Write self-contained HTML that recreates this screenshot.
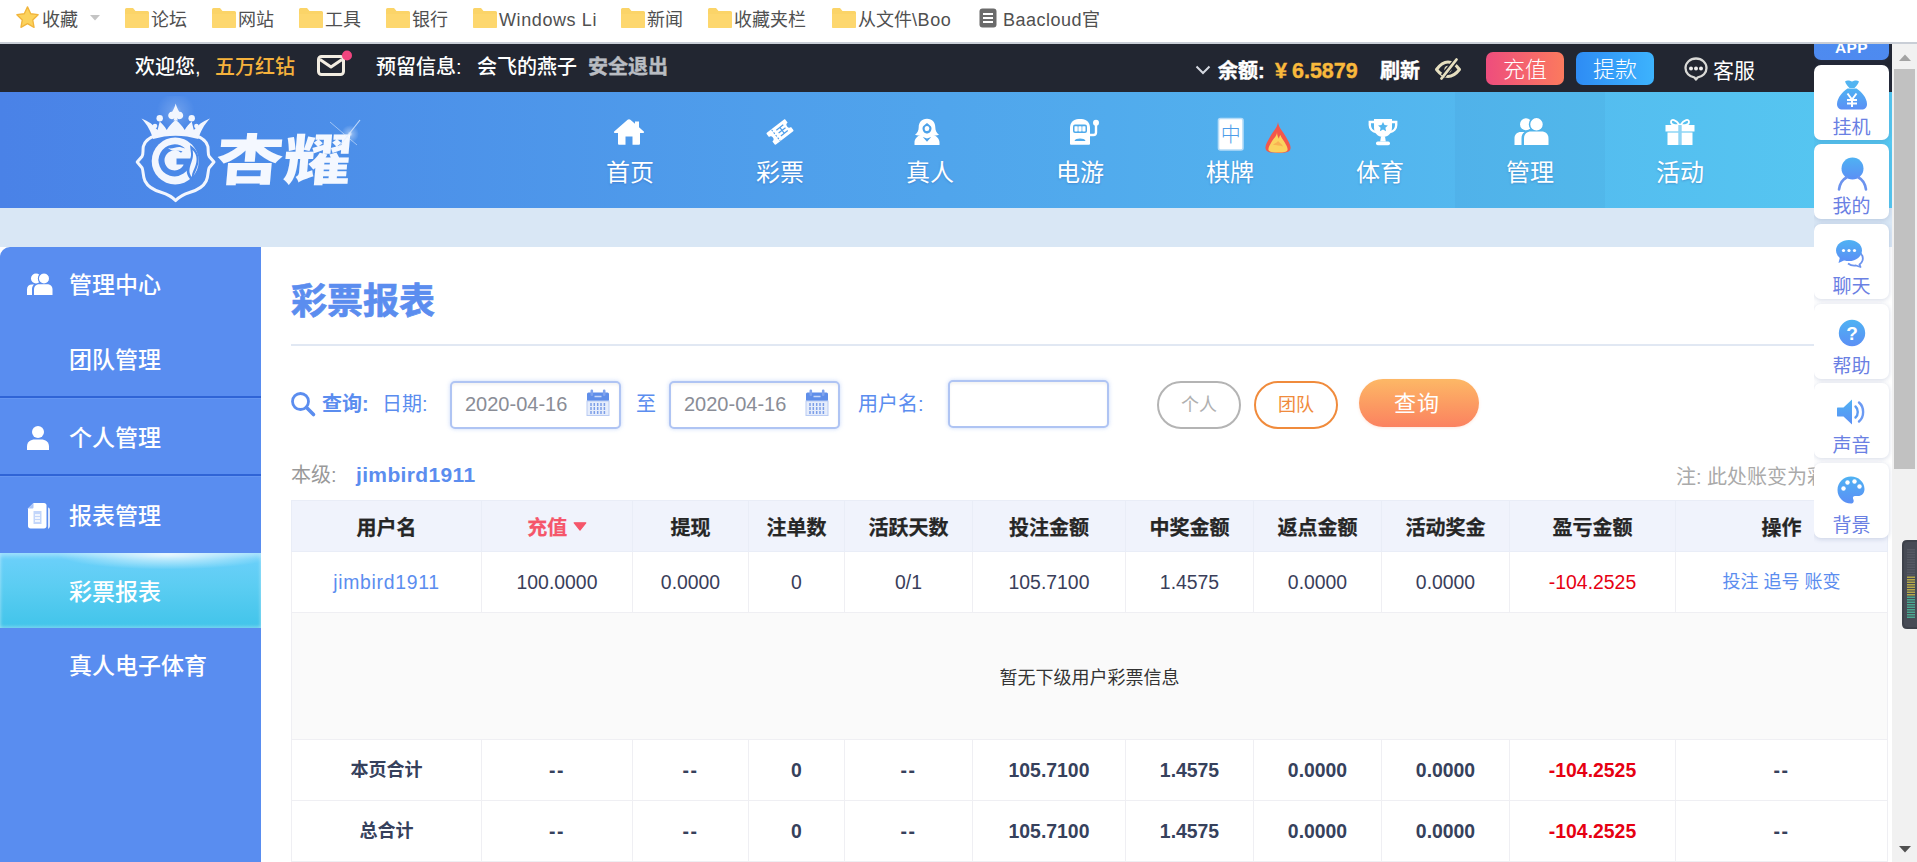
<!DOCTYPE html>
<html lang="zh-CN">
<head>
<meta charset="utf-8">
<title>彩票报表</title>
<style>
*{box-sizing:border-box;margin:0;padding:0}
html,body{width:1917px;height:862px;overflow:hidden;background:#fff}
body{font-family:"Liberation Sans","Noto Sans CJK SC",sans-serif;position:relative;color:#333}
.abs{position:absolute}
/* bookmark bar */
#bm{position:absolute;left:0;top:0;width:1917px;height:44px;background:#fff;border-bottom:2px solid #c9ced6;font-size:18px;color:#505050}
#bm .it{position:absolute;top:0;height:43px;line-height:40px;white-space:nowrap}
#bm svg{position:absolute}
/* dark bar */
#top{position:absolute;left:0;top:44px;width:1892px;height:48px;background:#222631;color:#fff;font-size:20px}
#top .t{position:absolute;top:0;height:48px;line-height:46px;white-space:nowrap;font-weight:500}
#top .b{font-weight:bold;-webkit-text-stroke:.4px currentColor}
/* header */
#hd{position:absolute;left:0;top:92px;width:1892px;height:116px;background:linear-gradient(90deg,#4a82e7 0%,#56c8f1 100%)}
#hd .nav{position:absolute;top:0;width:150px;height:116px;text-align:center;color:#fff;font-size:24px}
#hd .nav span{position:absolute;left:0;width:150px;top:63.500px;line-height:34px;text-shadow:0 1px 2px rgba(40,80,160,.35)}
#hd .nav svg{position:absolute;left:59px;top:24px}
#band{position:absolute;left:0;top:208px;width:1892px;height:39px;background:#d9e7f5}
/* sidebar */
#side{position:absolute;left:0;top:247px;width:261px;height:615px;background:#598df0;border-top-left-radius:10px;color:#fff;font-size:23px;overflow:hidden}
#side .m{position:absolute;left:69px;line-height:34px;white-space:nowrap;font-weight:500}
#side .sep{position:absolute;left:0;width:261px;height:3px;background:#2f64d6;border-bottom:1px solid #6596f2;margin-top:1px}
#side .act{position:absolute;left:0;top:306px;width:261px;height:75px;background:radial-gradient(ellipse 42% 20% at 64% 2%,rgba(255,255,255,.8),rgba(255,255,255,0)),linear-gradient(180deg,#6dd0fb 0%,#5bcdf2 45%,#41c4ea 100%);box-shadow:inset 0 3px 4px rgba(255,255,255,.35),inset 0 -2px 3px rgba(255,255,255,.25)}
/* main */
#main{position:absolute;left:261px;top:247px;width:1631px;height:615px;background:#fff;overflow:hidden}

#main .title{position:absolute;left:30px;top:27px;font-size:36px;font-weight:bold;color:#5b8def;line-height:56px;white-space:nowrap;-webkit-text-stroke:.7px #5b8def}
#main .hr{position:absolute;left:30px;top:97px;width:1596px;height:2px;background:#e1e8f3}
#main .lb{position:absolute;top:133px;height:48px;line-height:49px;font-size:20px;color:#5b8def;white-space:nowrap}
#main .inp{position:absolute;top:134px;height:48px;border:2px solid #afc4f3;border-radius:5px;background:#fff;box-shadow:0 0 4px rgba(120,160,240,.4),inset 0 2px 3px rgba(0,0,0,.05);font-size:20px;color:#8a8d96;line-height:42px;padding-left:13px}
#main .pill{position:absolute;top:134px;width:84px;height:48px;border-radius:24px;border:2px solid #b4b4b4;color:#b0b0b0;font-size:18px;text-align:center;line-height:45px;background:#fff}
#main .qbtn{position:absolute;left:1098px;top:132px;width:120px;height:48px;border-radius:24px;background:linear-gradient(180deg,#fdb866 0%,#fc9a62 55%,#fb8260 100%);color:#fff;font-size:22px;text-align:center;line-height:49px;letter-spacing:1px;padding-right:4px;box-shadow:0 1px 3px rgba(250,140,90,.2)}
#tb{position:absolute;left:30px;top:253px;border-collapse:collapse;table-layout:fixed;width:1597px;font-size:19.400px;color:#3a3e5a}
#tb td,#tb th{border:1px solid #efeff3;text-align:center;padding:0;white-space:nowrap;overflow:hidden}
#tb th{height:51px;background:#f0f3fc;font-size:20px;font-weight:bold;color:#262626;border-color:#e9edf7;padding-top:1px;-webkit-text-stroke:.25px currentColor}
#tb tr.r td{height:61px}
#tb tr.e td{height:127px;background:#fafafa;font-size:18px;color:#333}
#tb tr.s td{height:61px;font-weight:bold;color:#36415c}
#tb tr.s td.red,#tb td.red{color:#e60012}
#tb .red{color:#e60012}
#tb a{color:#5b8def;text-decoration:none}

#float{position:absolute;left:1814px;top:44px;width:78px;height:520px;overflow:hidden}
#float .c{position:absolute;left:0;width:75px;height:75px;background:#fff;border-radius:7px;box-shadow:0 1px 5px rgba(60,80,140,.22)}
#float .c span{position:absolute;left:0;width:75px;top:50px;text-align:center;font-size:19px;line-height:26px;color:#6a80e3;font-weight:400}
#float .c svg{position:absolute}
#sb{position:absolute;left:1892px;top:44px;width:25px;height:818px;background:#f1f1f1}
#sb .th{position:absolute;left:2px;top:25px;width:21px;height:400px;background:#c1c1c1}
</style>
</head>
<body>
<div id="bm">
<svg style="left:15px;top:5px" width="25" height="25" viewBox="0 0 24 24"><path d="M12 1.8l3.1 6.6 7.1.9-5.2 5 1.3 7.1L12 17.9 5.7 21.4 7 14.3 1.8 9.3l7.1-.9z" fill="#fcd25c" stroke="#f1b53c" stroke-width="1.3" stroke-linejoin="round"/></svg>
<div class="it" style="left:42px">收藏</div>
<svg style="left:89px;top:14px" width="12" height="8" viewBox="0 0 12 8"><path d="M1 1h10L6 6.5z" fill="#c4c4c4"/></svg>
<svg style="left:124px;top:7px" width="26" height="22" viewBox="0 0 26 22"><path d="M1 2.5Q1 1 2.5 1H9l2.5 3H23.5Q25 4 25 5.5V19.5Q25 21 23.5 21H2.5Q1 21 1 19.5Z" fill="#fbd468"/><path d="M1 7H25V19.5Q25 21 23.5 21H2.5Q1 21 1 19.5Z" fill="#fdd76e"/></svg>
<div class="it" style="left:151px">论坛</div>
<svg style="left:211px;top:7px" width="26" height="22" viewBox="0 0 26 22"><path d="M1 2.5Q1 1 2.5 1H9l2.5 3H23.5Q25 4 25 5.5V19.5Q25 21 23.5 21H2.5Q1 21 1 19.5Z" fill="#fbd468"/><path d="M1 7H25V19.5Q25 21 23.5 21H2.5Q1 21 1 19.5Z" fill="#fdd76e"/></svg>
<div class="it" style="left:238px">网站</div>
<svg style="left:298px;top:7px" width="26" height="22" viewBox="0 0 26 22"><path d="M1 2.5Q1 1 2.5 1H9l2.5 3H23.5Q25 4 25 5.5V19.5Q25 21 23.5 21H2.5Q1 21 1 19.5Z" fill="#fbd468"/><path d="M1 7H25V19.5Q25 21 23.5 21H2.5Q1 21 1 19.5Z" fill="#fdd76e"/></svg>
<div class="it" style="left:325px">工具</div>
<svg style="left:385px;top:7px" width="26" height="22" viewBox="0 0 26 22"><path d="M1 2.5Q1 1 2.5 1H9l2.5 3H23.5Q25 4 25 5.5V19.5Q25 21 23.5 21H2.5Q1 21 1 19.5Z" fill="#fbd468"/><path d="M1 7H25V19.5Q25 21 23.5 21H2.5Q1 21 1 19.5Z" fill="#fdd76e"/></svg>
<div class="it" style="left:412px">银行</div>
<svg style="left:472px;top:7px" width="26" height="22" viewBox="0 0 26 22"><path d="M1 2.5Q1 1 2.5 1H9l2.5 3H23.5Q25 4 25 5.5V19.5Q25 21 23.5 21H2.5Q1 21 1 19.5Z" fill="#fbd468"/><path d="M1 7H25V19.5Q25 21 23.5 21H2.5Q1 21 1 19.5Z" fill="#fdd76e"/></svg>
<div class="it" style="left:499px;letter-spacing:.6px">Windows Li</div>
<svg style="left:620px;top:7px" width="26" height="22" viewBox="0 0 26 22"><path d="M1 2.5Q1 1 2.5 1H9l2.5 3H23.5Q25 4 25 5.5V19.5Q25 21 23.5 21H2.5Q1 21 1 19.5Z" fill="#fbd468"/><path d="M1 7H25V19.5Q25 21 23.5 21H2.5Q1 21 1 19.5Z" fill="#fdd76e"/></svg>
<div class="it" style="left:647px">新闻</div>
<svg style="left:707px;top:7px" width="26" height="22" viewBox="0 0 26 22"><path d="M1 2.5Q1 1 2.5 1H9l2.5 3H23.5Q25 4 25 5.5V19.5Q25 21 23.5 21H2.5Q1 21 1 19.5Z" fill="#fbd468"/><path d="M1 7H25V19.5Q25 21 23.5 21H2.5Q1 21 1 19.5Z" fill="#fdd76e"/></svg>
<div class="it" style="left:734px">收藏夹栏</div>
<svg style="left:831px;top:7px" width="26" height="22" viewBox="0 0 26 22"><path d="M1 2.5Q1 1 2.5 1H9l2.5 3H23.5Q25 4 25 5.5V19.5Q25 21 23.5 21H2.5Q1 21 1 19.5Z" fill="#fbd468"/><path d="M1 7H25V19.5Q25 21 23.5 21H2.5Q1 21 1 19.5Z" fill="#fdd76e"/></svg>
<div class="it" style="left:858px">从文件<span style="letter-spacing:.6px">\Boo</span></div>
<svg style="left:979px;top:8px" width="18" height="20" viewBox="0 0 18 20"><rect x="0.5" y="0.5" width="17" height="19" rx="3" fill="#6b6b6b"/><rect x="4" y="5" width="10" height="2" fill="#fff"/><rect x="4" y="9" width="10" height="2" fill="#fff"/><rect x="4" y="13" width="10" height="2" fill="#fff"/></svg>
<div class="it" style="left:1003px"><span style="letter-spacing:.5px">Baacloud</span>官</div>
</div>
<div id="top">
<div class="t" style="left:135px">欢迎您,</div>
<div class="t" style="left:215px;color:#f6b23c">五万红钻</div>
<svg class="abs" style="left:316px;top:6px" width="42" height="30" viewBox="0 0 42 30"><rect x="2.5" y="6.5" width="25" height="18" rx="3" fill="none" stroke="#f3ede2" stroke-width="3"/><path d="M4 9.5l11 7.5 11-7.5" fill="none" stroke="#f3ede2" stroke-width="3" stroke-linejoin="round"/><circle cx="31" cy="5.5" r="5" fill="#f2457f"/></svg>
<div class="t" style="left:376px">预留信息:</div>
<div class="t" style="left:477px">会飞的燕子</div>
<div class="t b" style="left:588px;color:#b9bcc2">安全退出</div>
<svg class="abs" style="left:1195px;top:21px" width="16" height="10" viewBox="0 0 16 10"><path d="M1.500 1.500l6.500 6.500 6.500-6.500" fill="none" stroke="#d5d8e0" stroke-width="2"/></svg>
<div class="t b" style="left:1218px;top:4px">余额:</div>
<div class="t b" style="left:1275px;top:4px;color:#f9b93c;font-size:21.5px">¥<span style="margin-left:5px">6.5879</span></div>
<div class="t b" style="left:1380px;top:4px">刷新</div>
<svg class="abs" style="left:1434px;top:13px" width="28" height="24" viewBox="0 0 28 24"><path d="M2.500 12.500Q8 5 14 5T25.500 12.500Q20 19.500 14 19.500T2.500 12.500Z" fill="none" stroke="#e6dfc0" stroke-width="3" stroke-linejoin="round"/><circle cx="14" cy="12.300" r="3.600" fill="#e6dfc0"/><path d="M22.500 3L9 19" stroke="#222631" stroke-width="5.500"/><path d="M22.500 2.500L7.500 21.500" stroke="#e6dfc0" stroke-width="2.800" stroke-linecap="round"/></svg>
<div class="abs" style="left:1486px;top:8px;width:78px;height:33px;border-radius:7px;background:linear-gradient(90deg,#ee4d7d,#fb7a5e);text-align:center;line-height:36px;font-size:22px;font-weight:300">充值</div>
<div class="abs" style="left:1576px;top:8px;width:78px;height:33px;border-radius:7px;background:linear-gradient(90deg,#2e8cf4,#3db3fd);text-align:center;line-height:36px;font-size:22px;font-weight:300">提款</div>
<svg class="abs" style="left:1683px;top:12px" width="26" height="26" viewBox="0 0 26 26"><path d="M13 2.500c5.800 0 10.500 4.200 10.500 9.500 0 4.800-3.800 8.600-8.700 9.300L13 23.500l-1.800-2.200C6.300 20.600 2.500 16.800 2.500 12c0-5.300 4.700-9.500 10.500-9.500z" fill="none" stroke="#d9d9d6" stroke-width="2.300" stroke-linejoin="round"/><circle cx="8" cy="12.500" r="2" fill="#eee"/><circle cx="13" cy="12.500" r="2" fill="#eee"/><circle cx="18" cy="12.500" r="2" fill="#eee"/></svg>
<div class="t" style="left:1713px;top:4px;font-size:21px;font-weight:400">客服</div>
</div>
<div id="hd">
<svg class="abs" style="left:128px;top:4px" width="240" height="112" viewBox="0 0 240 112">
<defs><radialGradient id="gl"><stop offset="0" stop-color="#fff" stop-opacity=".95"/><stop offset=".3" stop-color="#fff" stop-opacity=".35"/><stop offset="1" stop-color="#fff" stop-opacity="0"/></radialGradient></defs>
<circle cx="47.7" cy="15" r="19" fill="url(#gl)" opacity=".4"/>
<g fill="#f2f6fe">
<path d="M47.7 7.500c1 3.500 2 6 3.600 8.300a3.700 3.700 0 1 1-2.200 6.500l.8 2.300h-4.400l.8-2.300a3.700 3.700 0 1 1-2.200-6.500c1.600-2.300 2.600-4.800 3.600-8.300z"/>
<circle cx="31.700" cy="22.300" r="3.200"/><circle cx="63.700" cy="22.300" r="3.200"/>
<circle cx="27" cy="30" r="2.300"/><circle cx="68.400" cy="30" r="2.300"/>
<path d="M13.500 22.500c7 2.500 12 6.500 16 11.500 1-3 1.500-6 2.200-8.500 3 2.500 5 5 7 8.500 2.500-4 5.500-7.500 9-10 3.500 2.500 6.500 6 9 10 2-3.500 4-6 7-8.500.700 2.500 1.200 5.500 2.200 8.500 4-5 9-9 16-11.500-6 6.500-9.500 13-11.500 20.500-15-4.500-30.500-4.500-45.400 0C23 35.500 19.500 29 13.500 22.500z"/>
</g>
<path d="M47.6 36.3C40.0 36.3 34.0 37.0 30.4 38.6C22.0 41.0 16.5 44.5 15.3 50.5C14.6 55.0 15.6 58.0 14.0 60.5L9.2 66.1L14.0 71.7C15.6 75.0 14.6 80.0 17.0 85.0C20.0 91.0 27.0 94.5 33.0 96.2C39.0 98.0 44.0 100.5 47.6 104.6C51.2 100.5 56.2 98.0 62.2 96.2C68.2 94.5 75.2 91.0 78.2 85.0C80.6 80.0 79.6 75.0 81.2 71.7L86.0 66.1L81.2 60.5C79.6 58.0 80.6 55.0 79.9 50.5C78.7 44.5 73.2 41.0 64.8 38.6C61.2 37.0 55.2 36.3 47.6 36.3Z" fill="none" stroke="#f2f6fe" stroke-width="3" stroke-linejoin="round"/>
<circle cx="47.200" cy="65" r="23.500" fill="#f2f6fe"/>
<path d="M55 54.500A13 13 0 1 0 59.500 65.500H48.500" fill="none" stroke="#4a88e8" stroke-width="6"/>
<path d="M62 49c7 4 10 11 8 19.500-1.500 6.500-5.500 11-5 17-5.500-3.500-7-9-6-14 1-5 4.500-9 4-14-.3-3-.7-5.500-1-8.500z" fill="#4a88e8"/>
<path d="M64.500 54c4 3.500 5 9 3.300 14.500-1.200 4.500-4 8-4 12.500-2.800-3.500-2.800-7-1.600-11 1.400-4.800 4-9.500 2.300-16z" fill="#f2f6fe"/>
<path d="M40 52c4 1.500 8-1.500 12-1 3 .4 5 2 8 1.500-1 2.500-4 3-7 2.500-4-.7-8 1.500-13-3z" fill="#f2f6fe"/>
<text transform="translate(86.500 83.800) skewX(-5) scale(1 .81)" x="0" y="0" font-size="68" font-weight="900" fill="#f4f8ff" textLength="135" lengthAdjust="spacingAndGlyphs" font-family="'Liberation Sans','Noto Sans CJK SC',sans-serif">杏耀</text>
<g><circle cx="222" cy="38" r="9" fill="url(#gl)" opacity=".9"/><path d="M232 24L210 52" stroke="#e4f0ff" stroke-width="1.200" opacity=".75"/><path d="M202 26L229 49" stroke="#e4f0ff" stroke-width="1" opacity=".55"/></g>
</svg>
<div class="nav" style="left:555px"><svg style="left:58px;top:26px" width="32" height="28" viewBox="0 0 32 28"><path d="M16 1.200c.5 0 1 .2 1.400.6L22 5.800V3.500h4v5.800l4.800 4.200c.6.600.2 1.500-.6 1.500H27v10.500c0 .8-.5 1.300-1.300 1.300H19.500v-8.300h-7v8.300H6.300c-.8 0-1.300-.5-1.300-1.300V15H1.800c-.8 0-1.200-.9-.6-1.500L14.600 1.800c.4-.4.900-.6 1.400-.6z" fill="#fff"/></svg><span>首页</span></div>
<div class="nav" style="left:705px"><svg style="left:61px;top:26px" width="28" height="28" viewBox="0 0 32 32"><g transform="rotate(-38 16 16)"><path d="M3.500 7.500h25c.5 0 1 .5 1 1v4.300a3.200 3.200 0 0 0 0 6.400v4.300c0 .5-.5 1-1 1h-25c-.5 0-1-.5-1-1v-4.300a3.200 3.200 0 0 0 0-6.400V8.500c0-.5.500-1 1-1z" fill="#fff"/><path d="M10 8v16" stroke="#4f9fea" stroke-width="1.200" stroke-dasharray="2.200 1.600"/><path d="M14 11.800h10M14 16h10M14 20.200h10M19 11.800v8.400" stroke="#4f9fea" stroke-width="1.400" fill="none"/></g></svg><span>彩票</span></div>
<div class="nav" style="left:855px"><svg style="left:58px;top:26px" width="28" height="28" viewBox="0 0 28 28"><path d="M14 .8c-5.500 0-8.300 3.700-8.300 8.500 0 3.200-1.200 5.500-3.700 7.500 2.200 1 4.500 1 6.200 0C5 18 1.500 20.300 1.500 24.500V27h25v-2.500c0-4.200-3.500-6.500-6.700-7.700 1.700 1 4 1 6.200 0-2.500-2-3.700-4.300-3.700-7.500C22.300 4.500 19.500.8 14 .8z" fill="#fff"/><path d="M14 5c-2.200 2-4.300 2.800-4.500 5 0 3.300 2 5.500 4.500 5.500s4.500-2.200 4.500-5.500c-.2-2.200-2.300-3-4.500-5z" fill="#4da2ea"/><ellipse cx="14" cy="10.500" rx="2.300" ry="2.600" fill="#fff"/><path d="M9.800 19l4.200 4.800 4.200-4.800-4.200 1.600z" fill="#4da2ea"/></svg><span>真人</span></div>
<div class="nav" style="left:1005px"><svg style="left:63px;top:26px" width="33" height="28" viewBox="0 0 33 28"><path d="M2 10C2 4.500 5.500 1 10.500 1h3C18.500 1 22 4.500 22 10v15.500c0 .8-.5 1.300-1.300 1.300H3.300c-.8 0-1.300-.5-1.300-1.300z" fill="#fff"/><rect x="5" y="6.500" width="14" height="8.500" rx="2" fill="#4fabec"/><rect x="6.500" y="8.200" width="3.200" height="5.200" rx=".6" fill="#fff"/><rect x="10.400" y="8.200" width="3.200" height="5.200" rx=".6" fill="#fff"/><rect x="14.300" y="8.200" width="3.200" height="5.200" rx=".6" fill="#fff"/><path d="M6.500 23c.8-3.200 10.200-3.200 11 0z" fill="#4fabec"/><path d="M22 17h3.500c1.500 0 2.500-1 2.500-2.500V6" fill="none" stroke="#fff" stroke-width="2.400"/><circle cx="28" cy="4.800" r="3" fill="#fff"/></svg><span>电游</span></div>
<div class="nav" style="left:1155px"><svg style="left:62px;top:25px" width="28" height="35" viewBox="0 0 28 35"><rect x="1.500" y="1.500" width="24.500" height="31.500" rx="2" fill="#fff" stroke="#b5dcf8" stroke-width="1.600"/><text x="13.700" y="24.500" font-size="20" font-weight="300" fill="#4e9de9" text-anchor="middle" font-family="'Liberation Sans','Noto Sans CJK SC',sans-serif">中</text></svg><svg style="left:109px;top:29px" width="28" height="33" viewBox="0 0 28 33"><path d="M14 1C13.500 6.500 9 10.500 6 16 3.500 20.500 1 24 1.500 27.500 2 31 6 32 14 32s12-1 12.500-4.500c.5-3.500-2-7-4.500-11.500-3-5.500-7.500-9.500-8-15z" fill="#f4574a"/><path d="M13 11c0 4-3.500 6.500-5.500 10-2 3.500-3.500 6-3 8 .5 2 4 2.500 9.500 2.500s9-.5 9.500-2.500c.5-2-1-4.500-3-8-1.500-2.600-3.500-4.500-4-7-1 1-1.500 2.200-1.500 3.800-1.200-2-2-4-2-6.800z" fill="#fbd35e"/><path d="M9 24c1.500-2 4-2 5-4 1.500 2 4 3 5 5.500-3-1-7-1.500-10-1.500z" fill="#f9a94f" opacity=".8"/></svg><span>棋牌</span></div>
<div class="nav" style="left:1305px"><svg style="left:62px;top:26px" width="32" height="29" viewBox="0 0 32 29"><path d="M7 1h18v8.500c0 5.500-3.800 9.500-9 9.500s-9-4-9-9.500z" fill="#fff"/><path d="M7.500 4H2.800v3c0 3.800 2.700 6.500 6.200 7M24.500 4h4.700v3c0 3.800-2.700 6.500-6.200 7" fill="none" stroke="#fff" stroke-width="2.400"/><path d="M16 4l1.500 3.100 3.400.4-2.500 2.300.7 3.400L16 11.500l-3.100 1.700.7-3.400-2.500-2.300 3.400-.4z" fill="#53b6ee"/><path d="M14 18.500h4l.8 5h-5.600z" fill="#fff"/><rect x="9" y="23.500" width="14" height="3.800" rx="1.800" fill="#fff"/></svg><span>体育</span></div>
<div class="nav" style="left:1455px;background:rgba(30,90,170,.055)"><svg style="left:58px;top:25px" width="37" height="29" viewBox="0 0 37 29"><circle cx="13" cy="7.300" r="6" fill="#fff"/><circle cx="23.500" cy="7.300" r="7" fill="#fff" stroke="#4fb2ea" stroke-width="1.500"/><path d="M1.500 28v-6.500c0-4 2.500-6.500 6.500-6.500h3.500c-2.200 1.500-3 3.800-3 6.500V28z" fill="#fff"/><path d="M11 28v-6.500c0-4.700 3-7 7-7h10.500c4 0 7 2.300 7 7V28z" fill="#fff"/></svg><span>管理</span></div>
<div class="nav" style="left:1605px"><svg style="left:59px;top:25px" width="32" height="29" viewBox="0 0 32 29"><path d="M15.500 8C12 2.500 7 1.500 7 5s5 3.200 8.500 3zM16.500 8C20 2.500 25 1.500 25 5s-5 3.200-8.500 3z" fill="none" stroke="#fff" stroke-width="1.800"/><rect x="1.500" y="8" width="29" height="6.500" fill="#fff"/><rect x="3.500" y="15.500" width="25" height="12.500" fill="#fff"/><rect x="14.300" y="8" width="3.400" height="20" fill="#8fd4f5"/></svg><span>活动</span></div>
</div>
<div id="band"></div>
<div id="side">
<svg class="abs" style="left:26px;top:25px" width="28" height="24" viewBox="0 0 28 24"><circle cx="10" cy="6.500" r="5" fill="#fff"/><circle cx="18" cy="6.500" r="5.600" fill="#fff" stroke="#598df0" stroke-width="1.200"/><path d="M1 23v-5.500c0-3.200 2-5 5-5h2c-1.500 1.300-2 3-2 5V23z" fill="#fff"/><path d="M8 23v-5.500c0-3.700 2.500-5.300 5.500-5.300h7.500c3 0 5.500 1.600 5.500 5.300V23z" fill="#fff"/></svg>
<div class="m" style="top:21px">管理中心</div>
<div class="m" style="top:96px">团队管理</div>
<div class="sep" style="top:148px"></div>
<svg class="abs" style="left:26px;top:178px" width="24" height="26" viewBox="0 0 24 26"><circle cx="12" cy="7" r="6" fill="#fff"/><path d="M1 25v-3.500c0-4.500 3.500-7 8-7h6c4.500 0 8 2.500 8 7V25z" fill="#fff"/></svg>
<div class="m" style="top:174px">个人管理</div>
<div class="sep" style="top:226px"></div>
<svg class="abs" style="left:27px;top:255px" width="24" height="28" viewBox="0 0 24 28"><path d="M1 6.500L6.500 1H17c1.500 0 2.500 1 2.500 2.500V24c0 1.500-1 2.500-2.500 2.500H3.500C2 26.500 1 25.500 1 24z" fill="#fff"/><path d="M21 5.500c1.200.3 2 1.200 2 2.500v16c0 1.500-1 2.500-2 2.700z" fill="#fff" opacity=".8"/><path d="M6.500 9h8v13h-8z" fill="#c3d6fa"/><path d="M8 13h5M8 16h5M8 19h5" stroke="#fff" stroke-width="1.300"/><path d="M1 6.500h4c1 0 1.500-.5 1.500-1.500V1z" fill="#aac4f7"/></svg>
<div class="m" style="top:252px">报表管理</div>
<div class="act"></div>
<div class="m" style="top:328px">彩票报表</div>
<div class="m" style="top:402px">真人电子体育</div>
</div>
<div id="main">
<div class="title">彩票报表</div>
<div class="hr"></div>
<svg class="abs" style="left:28px;top:143px" width="28" height="28" viewBox="0 0 28 28"><circle cx="11.500" cy="11.500" r="8" fill="none" stroke="#5b8def" stroke-width="2.800"/><path d="M17.500 17.500l7 7" stroke="#5b8def" stroke-width="3.600" stroke-linecap="round"/></svg>
<div class="lb" style="left:61px;font-weight:bold">查询:</div>
<div class="lb" style="left:121px">日期:</div>
<div class="inp" style="left:189px;width:171px">2020-04-16</div>
<svg class="abs" style="left:324px;top:141px" width="26" height="30" viewBox="0 0 26 30"><rect x="2" y="4.500" width="22" height="9" rx="1.500" fill="#5f8ee9"/><rect x="2" y="13" width="22" height="14.500" fill="#e6edfb" stroke="#b9cbf3" stroke-width="1"/><path d="M6 15v11M9.300 15v11M12.700 15v11M16 15v11M19.400 15v11" stroke="#7d9fe8" stroke-width="1.500"/><path d="M3 18.500h20M3 22.500h20" stroke="#e6edfb" stroke-width="1"/><rect x="5.500" y="1.500" width="2.600" height="6.500" rx="1.200" fill="#7fa3ee"/><rect x="17.900" y="1.500" width="2.600" height="6.500" rx="1.200" fill="#7fa3ee"/><path d="M9.500 8.500h7" stroke="#c9d8f8" stroke-width="1.500"/></svg>
<div class="lb" style="left:375px">至</div>
<div class="inp" style="left:408px;width:171px">2020-04-16</div>
<svg class="abs" style="left:543px;top:141px" width="26" height="30" viewBox="0 0 26 30"><rect x="2" y="4.500" width="22" height="9" rx="1.500" fill="#5f8ee9"/><rect x="2" y="13" width="22" height="14.500" fill="#e6edfb" stroke="#b9cbf3" stroke-width="1"/><path d="M6 15v11M9.300 15v11M12.700 15v11M16 15v11M19.400 15v11" stroke="#7d9fe8" stroke-width="1.500"/><path d="M3 18.500h20M3 22.500h20" stroke="#e6edfb" stroke-width="1"/><rect x="5.500" y="1.500" width="2.600" height="6.500" rx="1.200" fill="#7fa3ee"/><rect x="17.900" y="1.500" width="2.600" height="6.500" rx="1.200" fill="#7fa3ee"/><path d="M9.500 8.500h7" stroke="#c9d8f8" stroke-width="1.500"/></svg>
<div class="lb" style="left:597px">用户名:</div>
<div class="inp" style="left:687px;top:133px;width:161px"></div>
<div class="pill" style="left:896px">个人</div>
<div class="pill" style="left:993px;border-color:#f08b3c;color:#f08b3c">团队</div>
<div class="qbtn">查询</div>
<div class="abs" style="left:30px;top:212px;font-size:20px;color:#999;line-height:32px;white-space:nowrap">本级:</div>
<div class="abs" style="left:95px;top:212px;font-size:21px;font-weight:bold;color:#5b8def;line-height:32px;white-space:nowrap;letter-spacing:.35px">jimbird1911</div>
<div class="abs" style="left:1415px;top:214px;font-size:20px;color:#aaa;line-height:32px;white-space:nowrap">注: 此处账变为彩票账变</div>
<table id="tb"><colgroup><col style="width:190px"><col style="width:151px"><col style="width:116px"><col style="width:96px"><col style="width:128px"><col style="width:153px"><col style="width:128px"><col style="width:128px"><col style="width:128px"><col style="width:166px"><col style="width:212px"></colgroup>
<tr><th>用户名</th><th style="color:#f5566a">充值 <svg width="14" height="9" viewBox="0 0 14 9" style="position:relative;top:-4px"><path d="M1.200 0.800h11.600L7 8z" fill="#f5566a" stroke="#f5566a" stroke-width="1.200" stroke-linejoin="round"/></svg></th><th>提现</th><th>注单数</th><th>活跃天数</th><th>投注金额</th><th>中奖金额</th><th>返点金额</th><th>活动奖金</th><th>盈亏金额</th><th>操作</th></tr>
<tr class="r"><td><a style="letter-spacing:.7px">jimbird1911</a></td><td>100.0000</td><td>0.0000</td><td>0</td><td>0/1</td><td>105.7100</td><td>1.4575</td><td>0.0000</td><td>0.0000</td><td class="red">-104.2525</td><td><a style="font-size:18px;position:relative;top:-2px">投注 追号 账变</a></td></tr>
<tr class="e"><td colspan="11">暂无下级用户彩票信息</td></tr>
<tr class="s"><td><span style="font-size:18px;position:relative;top:-2px">本页合计</span></td><td style="letter-spacing:1.500px">--</td><td style="letter-spacing:1.500px">--</td><td>0</td><td style="letter-spacing:1.500px">--</td><td>105.7100</td><td>1.4575</td><td>0.0000</td><td>0.0000</td><td class="red">-104.2525</td><td style="letter-spacing:1.500px">--</td></tr>
<tr class="s"><td><span style="font-size:18px;position:relative;top:-2px">总合计</span></td><td style="letter-spacing:1.500px">--</td><td style="letter-spacing:1.500px">--</td><td>0</td><td style="letter-spacing:1.500px">--</td><td>105.7100</td><td>1.4575</td><td>0.0000</td><td>0.0000</td><td class="red">-104.2525</td><td style="letter-spacing:1.500px">--</td></tr>
</table>
</div>
<div id="float">
<div class="c" style="top:-59px;background:linear-gradient(180deg,#4a90ee,#4e8af0);border-radius:7px"><span style="color:#fff;font-weight:bold;font-size:15.500px;top:50px;letter-spacing:.3px">APP</span></div>
<div class="c" style="top:21px"><svg style="left:21px;top:14px" width="34" height="32" viewBox="0 0 34 32"><defs><linearGradient id="bg1" x1="0" y1="0" x2="0" y2="1"><stop offset="0" stop-color="#4fb2f3"/><stop offset="1" stop-color="#5b8ff5"/></linearGradient></defs><path d="M10 2.500c2.500-1.800 5-.5 7 0 2-.5 4.500-1.800 7 0-1 3-3 5-4.500 6.500h-5C13 7.500 11 5.500 10 2.500z" fill="#52b4f1"/><path d="M12.500 9.500h9C26 12 32 19 32 25c0 3.500-2 5.500-5.500 5.500h-19C4 30.500 2 28.500 2 25c0-6 6-13 10.500-15.500z" fill="url(#bg1)"/><path d="M12.500 14.500l4.500 6 4.500-6M12 21h10M12 24.500h10M17 20.500v7.500" fill="none" stroke="#fff" stroke-width="2"/></svg><span>挂机</span></div>
<div class="c" style="top:100px"><svg style="left:22px;top:12px" width="34" height="36" viewBox="0 0 34 36"><defs><linearGradient id="bg2" x1="0" y1="0" x2="0" y2="1"><stop offset="0" stop-color="#4fb2f3"/><stop offset="1" stop-color="#5b8ff5"/></linearGradient></defs><circle cx="16.500" cy="12.500" r="11" fill="url(#bg2)"/><path d="M3 33.500C4 26.500 7.500 23 10.500 21.500M30 33.500C29 26.500 25.500 23 22.500 21.500" fill="none" stroke="#6c93ee" stroke-width="2.600" stroke-linecap="round"/></svg><span>我的</span></div>
<div class="c" style="top:180px"><svg style="left:19px;top:12px" width="38" height="34" viewBox="0 0 38 34"><defs><linearGradient id="bg3" x1="0" y1="0" x2="0" y2="1"><stop offset="0" stop-color="#4fb2f3"/><stop offset="1" stop-color="#5b8ff5"/></linearGradient></defs><path d="M26 16c3 2 4.500 5 3.500 8.500-.8 2.500-3 4-3 4l1 2.500-4.500-1.500c-3 .5-6-.5-8-2" fill="none" stroke="#6c93ee" stroke-width="1.800" stroke-linejoin="round"/><ellipse cx="16" cy="14.500" rx="13" ry="10.500" fill="url(#bg3)"/><path d="M7 21l-1.500 6 6.500-3z" fill="#5b92f5"/><circle cx="10.500" cy="14.500" r="1.600" fill="#fff"/><circle cx="16" cy="14.500" r="1.600" fill="#fff"/><circle cx="21.500" cy="14.500" r="1.600" fill="#fff"/></svg><span>聊天</span></div>
<div class="c" style="top:259.500px"><svg style="left:24px;top:15px" width="28" height="28" viewBox="0 0 28 28"><defs><linearGradient id="bg4" x1="0" y1="0" x2="0" y2="1"><stop offset="0" stop-color="#4fb2f3"/><stop offset="1" stop-color="#5b8ff5"/></linearGradient></defs><circle cx="14" cy="14" r="13.200" fill="url(#bg4)"/><text x="14" y="20.500" font-size="19" font-weight="bold" fill="#fff" text-anchor="middle" font-family="'Liberation Sans',sans-serif">?</text></svg><span>帮助</span></div>
<div class="c" style="top:339px"><svg style="left:22px;top:15px" width="32" height="28" viewBox="0 0 32 28"><defs><linearGradient id="bg5" x1="0" y1="0" x2="0" y2="1"><stop offset="0" stop-color="#4fb2f3"/><stop offset="1" stop-color="#5b8ff5"/></linearGradient></defs><path d="M2 9.500h5.500L16 1.500v25L7.500 18.500H2c-.8 0-1-.5-1-1v-7c0-.5.200-1 1-1z" fill="url(#bg5)"/><path d="M19.500 8.500c3 2.500 3 8.500 0 11" fill="none" stroke="#5d9cf2" stroke-width="2.400" stroke-linecap="round"/><path d="M23 4.500c5.500 4.500 5.500 14.500 0 19" fill="none" stroke="#6b9af3" stroke-width="2.400" stroke-linecap="round"/></svg><span>声音</span></div>
<div class="c" style="top:418.500px"><svg style="left:22px;top:12px" width="30" height="30" viewBox="0 0 30 30"><defs><linearGradient id="bg6" x1="0" y1="0" x2="0" y2="1"><stop offset="0" stop-color="#4fb2f3"/><stop offset="1" stop-color="#5b8ff5"/></linearGradient></defs><path d="M15 1.500c7.500 0 13.500 5.500 13.500 12.500 0 4.500-3 7-6.500 7h-3c-1.500 0-2.500 1-2 2.500.5 1.500 1 2 .5 3.500-.5 1.200-1.500 1.500-2.500 1.500C7.500 28.500 1.500 22.500 1.500 15S7.500 1.500 15 1.500z" fill="url(#bg6)"/><circle cx="7.500" cy="13.500" r="2.200" fill="#fff"/><circle cx="11.500" cy="7.500" r="2.200" fill="#fff"/><circle cx="18.500" cy="6.500" r="2.200" fill="#fff"/><circle cx="23.500" cy="11.500" r="2.200" fill="#fff"/></svg><span>背景</span></div>
</div>
<div id="sb">
<svg class="abs" style="left:6.500px;top:9.500px" width="12" height="7" viewBox="0 0 12 7"><path d="M0 7L6 0.500 12 7z" fill="#a3a3a3"/></svg>
<div class="th"></div>
<svg class="abs" style="left:7px;top:802px" width="12" height="7" viewBox="0 0 12 7"><path d="M0 0L6 6.500 12 0z" fill="#505050"/></svg>
<svg class="abs" style="left:10px;top:496px" width="15" height="89" viewBox="0 0 15 89"><path d="M15 0H5Q0 0 0 5V84Q0 89 5 89H15z" fill="#3e424b"/><path d="M15 2H6Q2 2 2 6V83Q2 87 6 87H15z" fill="#474b55"/><rect x="5" y="9.0" width="8" height="1.500" fill="#555862"/><rect x="5" y="11.5" width="8" height="1.500" fill="#555862"/><rect x="5" y="14.0" width="8" height="1.500" fill="#555862"/><rect x="5" y="16.5" width="8" height="1.500" fill="#555862"/><rect x="5" y="19.0" width="8" height="1.500" fill="#555862"/><rect x="5" y="21.5" width="8" height="1.500" fill="#555862"/><rect x="5" y="24.0" width="8" height="1.500" fill="#555862"/><rect x="5" y="26.5" width="8" height="1.500" fill="#555862"/><rect x="5" y="29.0" width="8" height="1.500" fill="#555862"/><rect x="5" y="31.5" width="8" height="1.500" fill="#555862"/><rect x="5" y="34.0" width="8" height="1.500" fill="#555862"/><rect x="5" y="36.5" width="8" height="1.500" fill="#b5a94a"/><rect x="5" y="39.0" width="8" height="1.500" fill="#b5a94a"/><rect x="5" y="41.5" width="8" height="1.500" fill="#b5a94a"/><rect x="5" y="44.0" width="8" height="1.500" fill="#b5a94a"/><rect x="5" y="46.5" width="8" height="1.500" fill="#b5a94a"/><rect x="5" y="49.0" width="8" height="1.500" fill="#b5a94a"/><rect x="5" y="51.5" width="8" height="1.500" fill="#b5a94a"/><rect x="5" y="54.0" width="8" height="1.500" fill="#b5a94a"/><rect x="5" y="56.5" width="8" height="1.500" fill="#4aa890"/><rect x="5" y="59.0" width="8" height="1.500" fill="#4aa890"/><rect x="5" y="61.5" width="8" height="1.500" fill="#4aa890"/><rect x="5" y="64.0" width="8" height="1.500" fill="#4aa890"/><rect x="5" y="66.5" width="8" height="1.500" fill="#4aa890"/><rect x="5" y="69.0" width="8" height="1.500" fill="#4aa890"/><rect x="5" y="71.5" width="8" height="1.500" fill="#4aa890"/><rect x="5" y="74.0" width="8" height="1.500" fill="#4aa890"/><rect x="5" y="76.5" width="8" height="1.500" fill="#4aa890"/></svg>
</div>
</body>
</html>
